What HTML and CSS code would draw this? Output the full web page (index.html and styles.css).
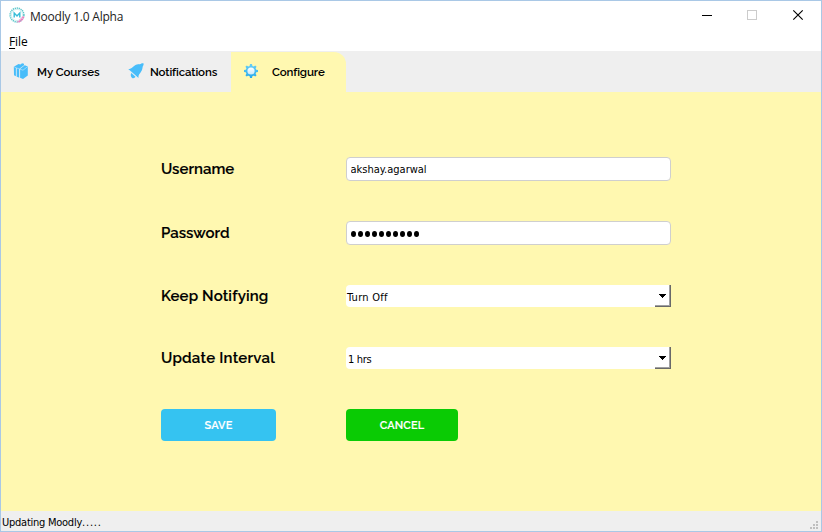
FILE: index.html
```
<!DOCTYPE html>
<html lang="en">
<head>
<meta charset="utf-8">
<title>Moodly 1.0 Alpha</title>
<link rel="stylesheet" href="styles.css">
</head>
<body>
<div class="window">
  <header class="titlebar">
    <svg class="logo" width="16" height="16" viewBox="0 0 16 16" fill="none">
      <circle cx="8" cy="8" r="6.9" stroke="#5cc6cb" stroke-width="1.5" stroke-dasharray="1.3 .7"/>
      <circle cx="8" cy="8" r="5.6" stroke="#b9e4e6" stroke-width=".6"/>
      <path d="M14.4 9.5A6.8 6.8 0 0 1 8.5 14.8" stroke="#f779bd" stroke-width="1.8" stroke-dasharray="2 .5"/>
      <path d="M13 10.3A5.5 5.5 0 0 1 10 13.2" stroke="#f9a5d2"/>
      <path d="M5.200 10.600V6L8 9l2.800-3v4.600" stroke="#35bdd8" stroke-width="1.400"/>
    </svg>
    <h1 class="title">Moodly 1.0 Alpha</h1>
    <svg class="controls" width="103" height="12" viewBox="0 0 103 12" fill="none" shape-rendering="crispEdges">
      <path d="M0 6.5h10" stroke="#000"/>
      <path d="M45.5 1.5h9v9h-9z" stroke="#ccc"/>
      <path d="M91.3 1.3l9.4 9.4M100.7 1.3l-9.4 9.4" stroke="#000" stroke-width="1.15" shape-rendering="auto"/>
    </svg>
  </header>
  <nav class="menubar"><span class="menu"><u>F</u>ile</span></nav>
  <nav class="tabs">
    <div class="tab courses">
      <svg width="16" height="16" viewBox="0 0 16 16">
        <path fill="#48bdfa" d="M.8 3.700L5.500 1l2 .6v1L3 5v8.200L1 12.200zM3.500 5L9 .2l2 .6v1.400L6.300 5.800v8.900l-2.800-1.200zM7 6l4.800-3.700 3 1.200v9L10 16l-3-1.200z"/>
        <path fill="none" stroke="#e0f2fb" stroke-width=".5" d="M3.300 5v8.500M6.700 6v8.800M7 6.200l3 1 4.500-3.500M3.700 5l2.800 1M1.200 3.900l2 .9"/>
      </svg>
      <span>My Courses</span>
    </div>
    <div class="tab notices">
      <svg width="16" height="16" viewBox="0 0 16 16">
        <path fill="#48bdfa" d="M.3 6.300C4.200 6 5 2.600 8.800 1.500c2-.6 3.500 0 5-1.300l1.700.1.100 1.600c-1.300 1.400-.8 3-1.600 5-1.300 3.200-3.700 4.100-3.600 8z"/>
        <path fill="none" stroke="#d5effc" stroke-width=".7" d="M1 7l8.800 7.900"/>
        <path fill="#48bdfa" d="M3.300 10l4.200 3.800c-.7 1.500-2.500 1.900-3.600.9-1.200-1-1.500-3.200-.6-4.700z"/>
      </svg>
      <span>Notifications</span>
    </div>
    <div class="tab configure">
      <svg width="16" height="16" viewBox="0 0 16 16">
        <defs><linearGradient id="gear" x1="0" y1="0" x2="0" y2="1"><stop stop-color="#69cff5"/><stop offset="1" stop-color="#25a9ec"/></linearGradient>
        <linearGradient id="hub" x1="0" y1="0" x2="0" y2="1"><stop stop-color="#fff"/><stop offset="1" stop-color="#c9e7fa"/></linearGradient></defs>
        <g fill="url(#gear)">
          <circle cx="8" cy="8" r="5.300"/>
          <path d="M7 1h2l.6 3H6.400zM7 15h2l.6-3H6.400zM1 7v2l3 .6V6.400zM15 7v2l-3 .6V6.400zM2.400 3.800l1.400-1.400 2.500 1.800L4.200 6.300zM13.600 3.800l-1.400-1.400-2.500 1.800 2.100 2.100zM2.400 12.200l1.400 1.400 2.500-1.800-2.100-2.100zM13.600 12.200l-1.400 1.400-2.500-1.800 2.100-2.100z"/>
        </g>
        <circle cx="8" cy="8" r="3.600" fill="url(#hub)"/>
      </svg>
      <span>Configure</span>
    </div>
  </nav>
  <main class="content">
    <form class="form">
      <label class="l-user" for="user"><span>Username</span></label>
      <input class="field user" id="user" type="text" value="akshay.agarwal">
      <label class="l-pass"><span>Password</span></label>
      <div class="field password"><i></i><i></i><i></i><i></i><i></i><i></i><i></i><i></i><i></i><i></i></div>
      <label class="l-keep"><span>Keep Notifying</span></label>
      <div class="combo off"><span>Turn Off</span>
        <b class="drop"><svg width="7" height="4" viewBox="0 0 7 4" shape-rendering="crispEdges"><path d="M0 0h7v1H0zM1 1h5v1H1zM2 2h3v1H2zM3 3h1v1H3z"/></svg></b>
      </div>
      <label class="l-update"><span>Update Interval</span></label>
      <div class="combo hours"><span>1 hrs</span>
        <b class="drop"><svg width="7" height="4" viewBox="0 0 7 4" shape-rendering="crispEdges"><path d="M0 0h7v1H0zM1 1h5v1H1zM2 2h3v1H2zM3 3h1v1H3z"/></svg></b>
      </div>
      <button class="btn save" type="button">SAVE</button>
      <button class="btn cancel" type="button">CANCEL</button>
    </form>
  </main>
  <footer class="status">
    <span>Updating Moodly<span class="dots">.....</span></span>
    <svg width="8" height="8" viewBox="0 0 8 8" fill="#bfbfbf"><path d="M6 0h2v2H6zM3 3h2v2H3zM6 3h2v2H6zM0 6h2v2H0zM3 6h2v2H3zM6 6h2v2H6z"/></svg>
  </footer>
</div>
</body>
</html>
```
FILE: styles.css
```
* { box-sizing: border-box; }
body { margin: 0; font-family: "DejaVu Sans Condensed", "DejaVu Sans", sans-serif; font-size: 11px; color: #000; }
.window { width: 822px; height: 532px; border: 1px solid #a9c8e6; background: #fff; display: flex; flex-direction: column; overflow: hidden; }
.titlebar { height: 30px; display: flex; align-items: center; padding: 0 16px 0 8px; }
.title { margin: 0 auto 0 5px; font: 12px "Open Sans", sans-serif; letter-spacing: -.22px; color: #222; }
.logo, .controls { margin-bottom: 2px; }
.menubar { height: 20px; padding: 0 8px; display: flex; align-items: center; font: 12px "Open Sans", sans-serif; }
.menu { letter-spacing: -.1px; }
.menu u { text-underline-offset: 2px; }
.tabs { height: 41px; background: #efefef; display: flex; padding-top: 1px; font: 600 11.500px Raleway, Lato, sans-serif; letter-spacing: -.12px; }
.tab { display: flex; align-items: center; white-space: nowrap; }
.tab svg { margin-bottom: 2px; }
.courses { width: 115px; padding-left: 12px; gap: 8px; letter-spacing: -.05px; }
.notices { width: 115px; padding-left: 12px; gap: 6px; }
.configure { width: 115px; padding-left: 12px; gap: 13px; background: #fff8b0; border-top-right-radius: 12px; }
.content { flex: 1; background: #fff8b0; padding: 65px 0 0 160px; }
.form { display: grid; grid-template-columns: 185px 325px; grid-template-rows: 24px 24px 22px 22px 32px; row-gap: 40px; align-items: center; }
label { font: 600 15px Raleway, Lato, sans-serif; letter-spacing: 0; -webkit-text-stroke: .15px #000; }
.l-keep { letter-spacing: .15px; }
.l-update { letter-spacing: .24px; }
.field { width: 325px; height: 24px; background: #fff; border: 1px solid #cfcfcf; border-radius: 4px; padding: 1px 4px 0; font: inherit; outline: none; }
.user { padding-left: 3.500px; }
.password { display: flex; align-items: center; gap: 2px; padding: 2px 4px 0; }
.password i { width: 5px; height: 6px; border-radius: 50%; background: #000; }
.combo { height: 22px; background: #fff; border-radius: 4px 0 0 4px; display: flex; align-items: center; padding-left: 1px; }
.combo span { flex: 1; padding-top: 2px; letter-spacing: .25px; }
.hours { padding-left: 2px; }
.hours span { letter-spacing: -.3px; }
.drop { width: 16px; height: 22px; border-right: 1px solid #696969; border-bottom: 1px solid #696969; box-shadow: inset -1px -1px #a0a0a0; display: flex; align-items: center; justify-content: center; }
.btn { border: 0; border-radius: 4px; height: 32px; color: #fff; font: 600 11px Raleway, Lato, sans-serif; letter-spacing: .1px; padding: 0; -webkit-text-stroke: .15px #fff; }
.save { width: 115px; background: #35c3f1; }
.cancel { width: 112px; background: #0acb04; }
.status { height: 20px; background: #efefef; display: flex; justify-content: space-between; align-items: center; padding: 2px 3px 0 1px; }
.status > span { letter-spacing: -.25px; }
.status svg { align-self: flex-end; margin-bottom: 2px; }
.status .dots { letter-spacing: .8px; }
```
